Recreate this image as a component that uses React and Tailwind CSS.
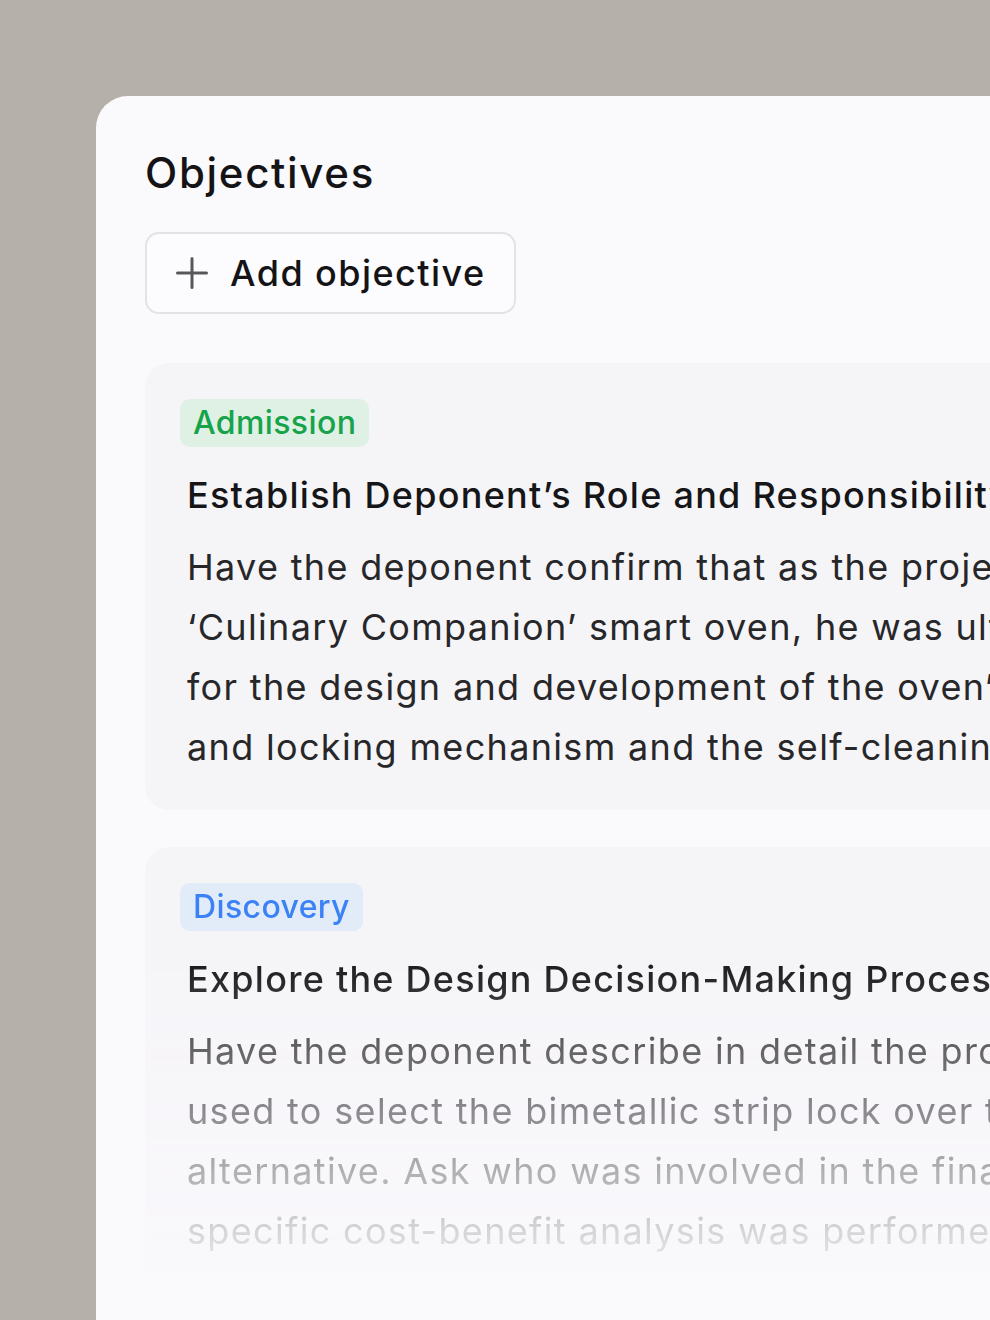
const objectives = [
    {
        tag: 'Admission',
        tagClass: 'bg-[#dff0e5] text-[#16a34a]',
        title: 'Establish Deponent’s Role and Responsibility for the Oven Door',
        lines: [
            'Have the deponent confirm that as the project lead for the',
            '‘Culinary Companion’ smart oven, he was ultimately responsible',
            'for the design and development of the oven’s door latch',
            'and locking mechanism and the self-cleaning feature.',
        ],
        faded: false,
    },
    {
        tag: 'Discovery',
        tagClass: 'bg-[#e2ebf8] text-[#3b82f6]',
        title: 'Explore the Design Decision-Making Process for the Lock',
        lines: [
            'Have the deponent describe in detail the process his team',
            'used to select the bimetallic strip lock over the solenoid',
            'alternative. Ask who was involved in the final decision and what',
            'specific cost-benefit analysis was performed before approval.',
        ],
        faded: true,
    },
];

const PlusIcon = () => (
    <svg width="32" height="32" viewBox="0 0 32 32" fill="none" stroke="#58585c" strokeWidth="3" strokeLinecap="round">
        <path d="M16 1.5v29M1.5 16h29" />
    </svg>
);

const ObjectiveCard = ({ item }) => (
    <div
        className={
            'rounded-[24px] bg-[#f5f4f7] pl-[35px] pr-10 pt-9 pb-[33px] ' +
            (item.faded
                ? '[mask-image:linear-gradient(to_bottom,#000_24%,transparent_99%)] [-webkit-mask-image:linear-gradient(to_bottom,#000_24%,transparent_99%)]'
                : '')
        }
    >
        <span className={'inline-flex h-12 items-center rounded-[10px] px-[13px] text-[32px] font-medium tracking-[0.012em] ' + item.tagClass}>
            {item.tag}
        </span>
        <h2 className="mt-6 pl-[7px] whitespace-nowrap text-[36px] leading-[48px] font-medium tracking-[0.035em] text-[#161618]">
            {item.title}
        </h2>
        <p className="mt-[18px] pl-[7px] whitespace-nowrap text-[36px] leading-[60px] tracking-[0.037em] text-[#27272a]">
            {item.lines.map((line, i) => (
                <span key={i} className="block">{line}</span>
            ))}
        </p>
    </div>
);

export default function App() {
    return (
        <div className="h-[1320px] overflow-hidden bg-[#b5b0aa] pt-24 pl-24 font-['Inter',sans-serif]">
            <div className="h-[1300px] w-[1500px] rounded-tl-[32px] bg-[#faf9fc] pl-[49px] pt-[53px]">
                <h1 className="text-[42px] leading-[48px] font-medium tracking-[0.04em] text-[#141416]">Objectives</h1>

                <button className="mt-[35px] flex h-[82px] items-center gap-[22px] rounded-[14px] border-2 border-[#e3e2e6] bg-[#fcfbfd] pl-[29px] pr-[28px] text-[36px] font-medium tracking-[0.04em] text-[#141416]">
                    <PlusIcon />
                    Add objective
                </button>

                <div className="mt-[49px] flex flex-col gap-[37px]">
                    {objectives.map((item) => (
                        <ObjectiveCard key={item.tag} item={item} />
                    ))}
                </div>
            </div>
        </div>
    );
}
